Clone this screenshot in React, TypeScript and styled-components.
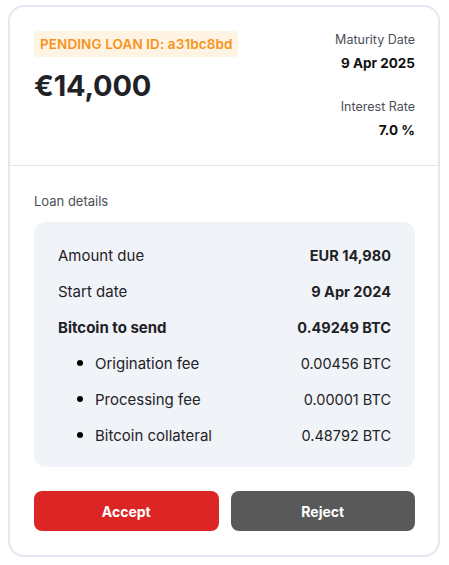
import React from "react";
import styled, { createGlobalStyle } from "styled-components";

const Global = createGlobalStyle`
  html, body { margin: 0; padding: 0; background: #ffffff; }
  body { font-family: Inter, "Noto Sans", sans-serif; color: #1f2328; }
  * { box-sizing: border-box; }
`;

const Page = styled.div`
  padding: 5px 9px 0 8px;
`;

const Card = styled.div`
  width: 432px;
  height: 552px;
  border: 2px solid #e3e8f0;
  border-radius: 16px;
  background: #fff;
  display: flex;
  flex-direction: column;
`;

const Header = styled.div`
  display: flex;
  justify-content: space-between;
  padding: 24px 23px 0 24px;
  height: 159px;
  border-bottom: 1px solid #e3e8f0;
`;

const LeftCol = styled.div`
  display: flex;
  flex-direction: column;
  align-items: flex-start;
`;

const Badge = styled.div`
  background: #fff3e4;
  color: #f7931a;
  font-size: 13.5px;
  font-weight: 600;
  border-radius: 4px;
  padding: 5px 6px;
  line-height: 16px;
  letter-spacing: 0.1px;
`;

const Amount = styled.div`
  font-size: 29px;
  font-weight: 700;
  color: #1f2328;
  margin-top: 10px;
  line-height: 38px;
  letter-spacing: -0.2px;
`;

const RightCol = styled.div`
  display: flex;
  flex-direction: column;
  align-items: flex-end;
`;

const Label = styled.div<{ $gap?: number }>`
  font-size: 12.5px;
  color: #4a4f57;
  line-height: 18px;
  margin-top: ${(p) => p.$gap ?? 0}px;
`;

const Value = styled.div`
  font-size: 13.5px;
  font-weight: 700;
  color: #111;
  line-height: 18px;
  margin-top: 5px;
`;

const Body = styled.div`
  padding: 26px 23px 0 24px;
  display: flex;
  flex-direction: column;
`;

const SectionTitle = styled.div`
  font-size: 13px;
  color: #4a4f57;
  line-height: 18px;
`;

const Details = styled.div`
  margin-top: 12px;
  background: #f0f3f8;
  border-radius: 12px;
  padding: 15px 24px 14px 24px;
  display: flex;
  flex-direction: column;
`;

const Row = styled.div<{ $strong?: boolean }>`
  height: 36px;
  display: flex;
  align-items: center;
  justify-content: space-between;
  font-size: 15px;
  color: #1f2226;
  font-weight: ${(p) => (p.$strong ? 700 : 400)};
`;

const RowLabel = styled.div<{ $bullet?: boolean }>`
  display: flex;
  align-items: center;
  padding-left: ${(p) => (p.$bullet ? 19 : 0)}px;
`;

const Dot = styled.span`
  width: 6px;
  height: 6px;
  border-radius: 50%;
  background: #000;
  margin-right: 12px;
`;

const RowValue = styled.div<{ $bold?: boolean }>`
  font-weight: ${(p) => (p.$bold ? 700 : 400)};
  font-size: 14.5px;
`;

const Actions = styled.div`
  display: grid;
  grid-template-columns: 1fr 1fr;
  gap: 12px;
  margin-top: 24px;
`;

const Button = styled.button<{ $variant: "accept" | "reject" }>`
  height: 40px;
  border: none;
  border-radius: 8px;
  background: ${(p) => (p.$variant === "accept" ? "#dc2626" : "#595959")};
  color: #fff;
  font-family: Inter, sans-serif;
  font-size: 14px;
  font-weight: 700;
  cursor: pointer;
`;

const rows = [
  { label: "Amount due", value: "EUR 14,980", bold: true },
  { label: "Start date", value: "9 Apr 2024", bold: true },
  { label: "Bitcoin to send", value: "0.49249 BTC", bold: true, strong: true },
  { label: "Origination fee", value: "0.00456 BTC", bullet: true },
  { label: "Processing fee", value: "0.00001 BTC", bullet: true },
  { label: "Bitcoin collateral", value: "0.48792 BTC", bullet: true },
];

export default function App() {
  return (
    <>
      <Global />
      <Page>
        <Card>
          <Header>
            <LeftCol>
              <Badge>PENDING LOAN ID: a31bc8bd</Badge>
              <Amount>€14,000</Amount>
            </LeftCol>
            <RightCol>
              <Label>Maturity Date</Label>
              <Value>9 Apr 2025</Value>
              <Label $gap={26}>Interest Rate</Label>
              <Value>7.0 %</Value>
            </RightCol>
          </Header>
          <Body>
            <SectionTitle>Loan details</SectionTitle>
            <Details>
              {rows.map((r) => (
                <Row key={r.label} $strong={r.strong}>
                  <RowLabel $bullet={r.bullet}>
                    {r.bullet && <Dot />}
                    {r.label}
                  </RowLabel>
                  <RowValue $bold={r.bold}>{r.value}</RowValue>
                </Row>
              ))}
            </Details>
            <Actions>
              <Button $variant="accept">Accept</Button>
              <Button $variant="reject">Reject</Button>
            </Actions>
          </Body>
        </Card>
      </Page>
    </>
  );
}
